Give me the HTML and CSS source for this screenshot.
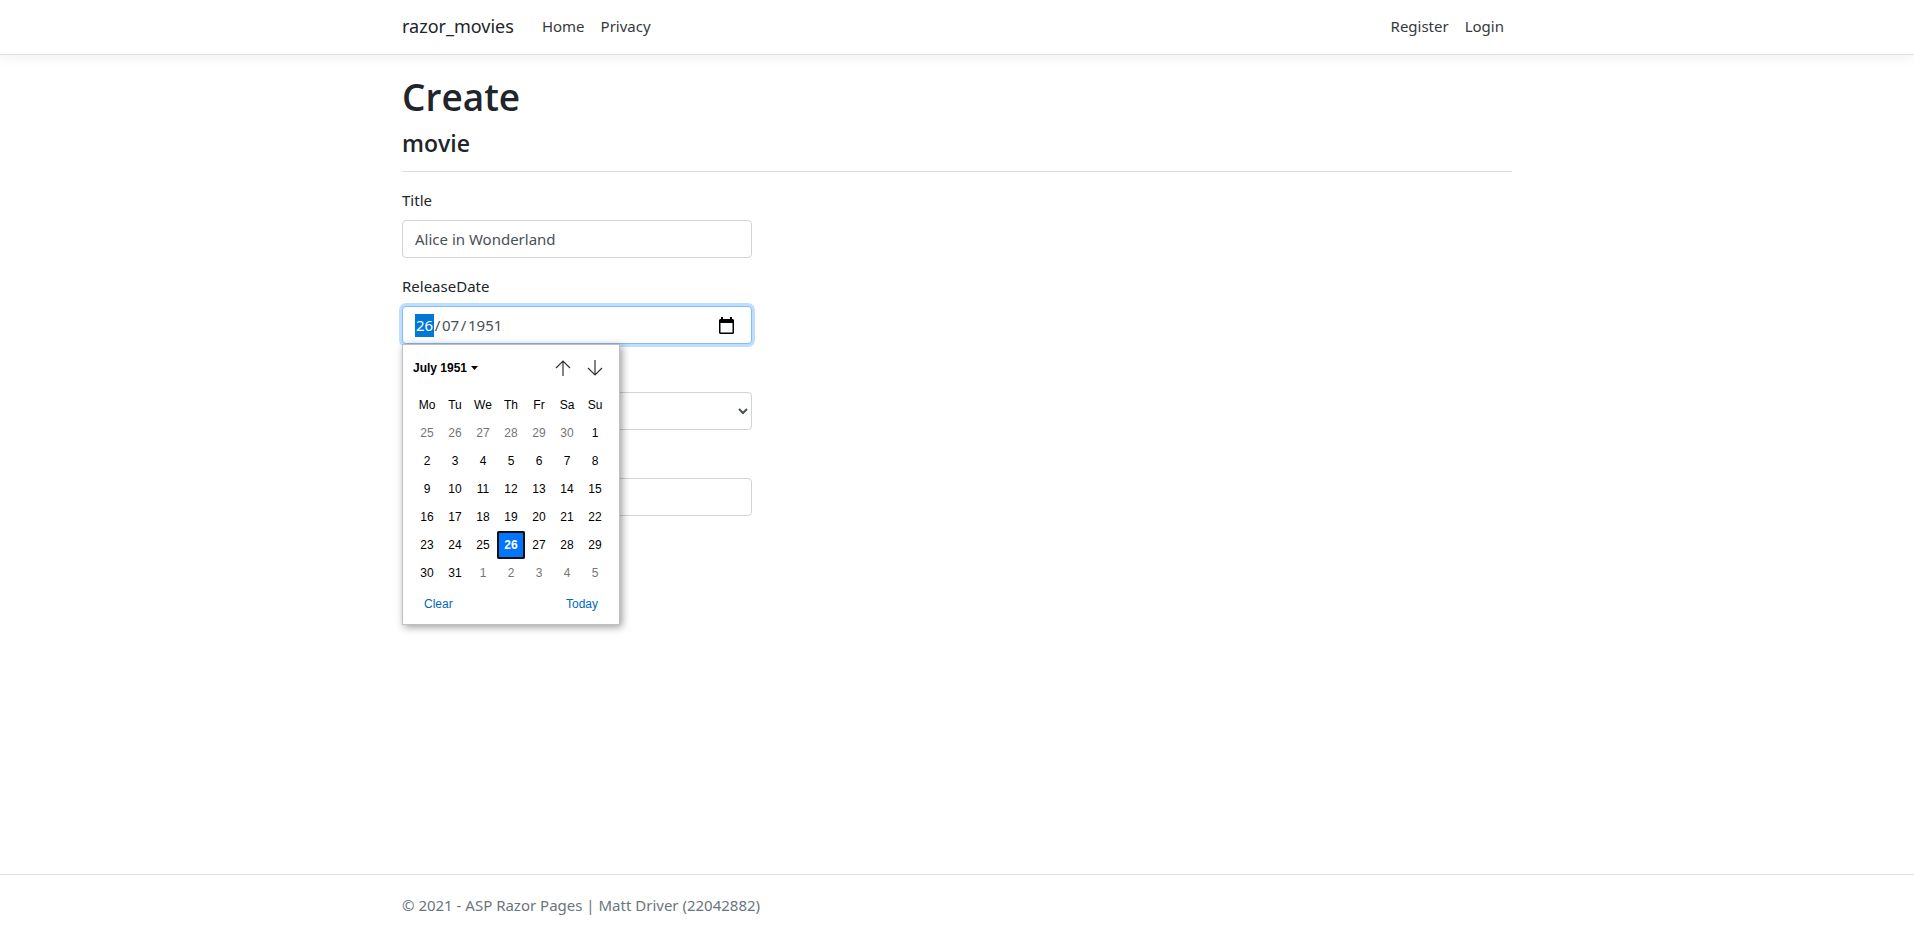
FILE: index.html
```html
<!DOCTYPE html>
<html lang="en-GB">
<head>
<meta charset="utf-8">
<meta name="viewport" content="width=device-width, initial-scale=1">
<title>Create - razor_movies</title>
<link rel="stylesheet" href="styles.css">
</head>
<body>
<header class="site-header">
  <nav class="container navbar">
    <a class="brand" href="#">razor_movies</a>
    <a class="nav-link" href="#">Home</a>
    <a class="nav-link" href="#">Privacy</a>
    <div class="account">
      <a class="nav-link" href="#">Register</a>
      <a class="nav-link" href="#">Login</a>
    </div>
  </nav>
</header>
<main class="container main">
  <h1 class="title">Create</h1>
  <h2 class="subtitle">movie</h2>
  <hr class="rule">
  <form class="movie-form">
    <div class="group">
      <label class="label" for="title">Title</label>
      <input class="control" id="title" type="text" value="Alice in Wonderland">
    </div>
    <div class="group date-group">
      <label class="label" for="day">ReleaseDate</label>
      <div class="control date-control">
        <input class="segment segment-active" id="day" type="text" value="26"><span class="slash">/</span><input class="segment" type="text" value="07" aria-label="Month"><span class="slash">/</span><input class="segment segment-year" type="text" value="1951" aria-label="Year">
        <button class="picker-button" type="button" aria-label="Show date picker">
          <svg width="15" height="17" viewBox="0 0 15 17"><path fill="#000" fill-rule="evenodd" d="M2 0h2v2h7V0h2v2h1l1 1v13l-1 1H1l-1-1V3l1-1h1zM1.500 6v9.500h12V6z"/></svg>
        </button>
      </div>
      <div class="calendar">
        <div class="calendar-head">
          <button class="month-button" type="button">July 1951
            <svg width="7" height="4" viewBox="0 0 7 4"><path d="M0 0h7L3.500 4z"/></svg>
          </button>
          <button class="arrow-button" type="button" aria-label="Previous month">
            <svg width="16" height="16" viewBox="0 0 16 16" fill="none" stroke="#333" stroke-width="1.200"><path d="M8 16V1M1 8l7-7 7 7"/></svg>
          </button>
          <button class="arrow-button" type="button" aria-label="Next month">
            <svg width="16" height="16" viewBox="0 0 16 16" fill="none" stroke="#333" stroke-width="1.200"><path d="M8 0v15M1 8l7 7 7-7"/></svg>
          </button>
        </div>
        <table class="days">
          <thead><tr><th>Mo</th><th>Tu</th><th>We</th><th>Th</th><th>Fr</th><th>Sa</th><th>Su</th></tr></thead>
          <tbody>
            <tr><td class="other">25</td><td class="other">26</td><td class="other">27</td><td class="other">28</td><td class="other">29</td><td class="other">30</td><td>1</td></tr>
            <tr><td>2</td><td>3</td><td>4</td><td>5</td><td>6</td><td>7</td><td>8</td></tr>
            <tr><td>9</td><td>10</td><td>11</td><td>12</td><td>13</td><td>14</td><td>15</td></tr>
            <tr><td>16</td><td>17</td><td>18</td><td>19</td><td>20</td><td>21</td><td>22</td></tr>
            <tr><td>23</td><td>24</td><td>25</td><td class="selected">26</td><td>27</td><td>28</td><td>29</td></tr>
            <tr><td>30</td><td>31</td><td class="other">1</td><td class="other">2</td><td class="other">3</td><td class="other">4</td><td class="other">5</td></tr>
          </tbody>
        </table>
        <div class="calendar-foot">
          <button class="text-button" type="button">Clear</button>
          <button class="text-button" type="button">Today</button>
        </div>
      </div>
    </div>
    <div class="group group-plain">
      <select class="control" aria-label="Genre"><option></option></select>
    </div>
    <div class="group group-plain">
      <input class="control" type="text" aria-label="Price">
    </div>
  </form>
</main>
<footer class="site-footer">
  <div class="container">© 2021 - ASP Razor Pages | Matt Driver (22042882)</div>
</footer>
</body>
</html>
```
FILE: styles.css
```css
*, *::before, *::after { box-sizing: border-box; }
body {
  display: flex;
  flex-direction: column;
  min-height: 100vh;
  margin: 0;
  background: #fff;
  color: #212529;
  font: 15px/24px "Noto Sans", "Open Sans", sans-serif;
}
button, input, select { font: inherit; }
button { margin: 0; padding: 0; border: 0; background: none; cursor: pointer; }
svg { display: block; }

.container { width: 100%; max-width: 1140px; margin: 0 auto; padding: 0 15px; }

.site-header { border-bottom: 1px solid #dee2e6; box-shadow: 0 4px 12px rgba(0, 0, 0, .05); }
.navbar { display: flex; align-items: center; min-height: 54px; padding-bottom: 2px; }
.brand { margin-right: 20px; color: #212529; font-size: 18px; text-decoration: none; }
.nav-link { padding: 8px; color: #343a40; text-decoration: none; }
.account { display: flex; margin-left: auto; }

.main { flex: 1; padding-top: 16px; }
.title, .subtitle { font-family: "Open Sans", "Noto Sans", sans-serif; font-weight: 600; }
.title { margin: 0 0 6px; font-size: 37px; line-height: 52px; }
.subtitle { margin: 0; font-size: 23px; line-height: 28px; }
.rule { height: 1px; margin: 14px 0 16px; border: 0; background: #dfdfe0; }

.movie-form { width: 350px; max-width: 100%; }
.group { margin-bottom: 16px; }
.group-plain { padding-top: 32px; }
.label { display: block; margin-bottom: 8px; }
.control {
  display: block;
  width: 100%;
  height: 38px;
  padding: 6px 12px;
  border: 1px solid #ced4da;
  border-radius: 4px;
  background: #fff;
  color: #495057;
}

.date-group { position: relative; }
.date-control { display: flex; align-items: center; border-color: #80bdff; box-shadow: 0 0 0 3px #bfdeff; }
.segment { width: 19px; height: 23px; padding: 0 1px; border: 0; background: none; color: inherit; }
.segment-year { width: 38px; }
.segment-active { background: #0078d7; color: #fff; }
.slash { width: 7px; text-align: center; }
.picker-button { margin: 0 5px 0 auto; }

.calendar {
  position: absolute;
  top: 100%;
  left: 0;
  width: 218px;
  padding: 4px 10px;
  border: 1px solid #bfbfbf;
  background: #fff;
  box-shadow: 2px 2px 8px rgba(0, 0, 0, .4);
  color: #000;
  font: 12px/16px "Liberation Sans", Arial, sans-serif;
}
.calendar-head { display: flex; align-items: center; gap: 16px; height: 38px; margin-bottom: 4px; padding-right: 6px; }
.month-button { display: flex; align-items: center; gap: 4px; margin-right: auto; font-weight: 700; }
.days { border-collapse: collapse; table-layout: fixed; text-align: center; }
.days th, .days td { width: 28px; height: 28px; padding: 0; font-weight: 400; }
.days .other { color: #757575; }
.days .selected {
  border-radius: 2px;
  background: #0075ff;
  box-shadow: inset 0 0 0 2px #101010;
  color: #fff;
  font-weight: 700;
}
.calendar-foot { display: flex; justify-content: space-between; height: 33px; padding: 0 11px; }
.text-button { color: #0067c0; }

.site-footer { padding: 18px 0 12px; border-top: 1px solid #dee2e6; color: #6c757d; }
```
